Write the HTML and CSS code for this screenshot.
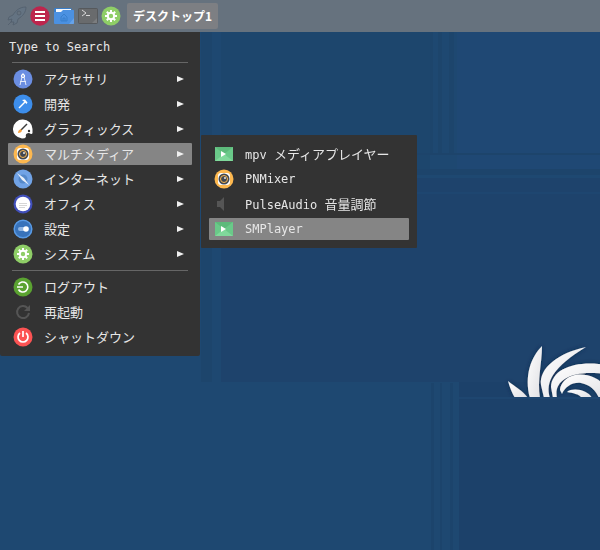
FILE: index.html
```html
<!DOCTYPE html>
<html lang="ja">
<head>
<meta charset="utf-8">
<title>デスクトップ1</title>
<link rel="stylesheet" href="styles.css">
</head>
<body>
<svg class="wallpaper" aria-hidden="true">
  <defs>
    <linearGradient id="petal" x1="0" y1="0" x2="1" y2="1"><stop offset="0" stop-color="#fff"/><stop offset="1" stop-color="#dfdfe3"/></linearGradient>
    <filter id="shade" x="-20%" y="-20%" width="140%" height="140%"><feDropShadow dx="0" dy="0" stdDeviation="2" flood-color="#0b2747" flood-opacity=".8"/></filter>
    <clipPath id="horizon"><rect x="490" y="330" width="200" height="67"/></clipPath>
  </defs>
  <rect width="100%" height="100%" fill="#1e4871"/>
  <rect x="221" y="0" width="209" height="170" fill="#1d466d"/>
  <rect x="457" y="0" width="100%" height="170" fill="#1f4874"/>
  <rect x="201" y="0" width="11" height="382" fill="#1d456c"/>
  <rect x="221" y="178" width="100%" height="204" fill="#1e436c"/>
  <rect x="430" y="0" width="3" height="153" fill="#1d456c"/>
  <rect x="438" y="0" width="4" height="153" fill="#1d456c"/>
  <rect x="449" y="0" width="5" height="153" fill="#1d456c"/>
  <rect x="417" y="153" width="100%" height="2" fill="#1d446b"/>
  <rect x="417" y="169" width="100%" height="6" fill="#1d446b"/>
  <rect x="417" y="192" width="100%" height="2" fill="#1e4670"/>
  <rect x="459" y="382" width="100%" height="100%" fill="#1c416a"/>
  <rect x="459" y="397" width="100%" height="2" fill="#1e4670"/>
  <rect x="431" y="383" width="3" height="100%" fill="#1c446c"/>
  <rect x="440" y="383" width="2" height="100%" fill="#1c446c"/>
  <rect x="450" y="383" width="3" height="100%" fill="#1c446c"/>
  <g clip-path="url(#horizon)">
    <g fill="url(#petal)" filter="url(#shade)">
      <path d="M508 381C514 386 523 391 528 398H515C512 393 510 388 508 381Z"/>
      <path d="M542 346C531 357 524 376 530 398H540C537 380 542 364 542 346Z"/>
      <path d="M586 347C558 353 539 368 541 385L544 398H550C545 382 553 367 586 347Z"/>
      <path d="M612 366C580 359 552 367 551 387L553 398H557C553 380 572 368 612 375Z"/>
      <path d="M612 398C604 378 588 373 575 375 566 377 560 384 560 390L562 394C565 387 572 382 581 383 591 385 596 391 599 398Z"/>
      <path d="M567 392C573 387 588 390 592 398H582C579 394 573 393 567 392Z"/>
    </g>
  </g>
</svg>

<header class="panel">
  <button class="launcher" aria-label="ランチャー"><svg viewBox="0 0 20 20"><path d="M19 1C13 1 9 4 6 9L2 11 1 14 5 13 4 16 7 16 6 19 10 17 11 13C16 10 19 6 19 1ZM1 19L5 15M12 5A2 2 0 1 1 12 9 2 2 0 0 1 12 5" fill="#647382" stroke="#525e6c" stroke-width=".8"/></svg></button>
  <button class="launcher" aria-label="メニュー"><svg viewBox="0 0 20 20"><circle cx="10" cy="10" r="9.700" fill="#bd254d"/><path d="M5 6H15M5 10H15M5 14H15" stroke="#fff" stroke-width="2"/></svg></button>
  <button class="launcher wide" aria-label="ファイル"><svg viewBox="0 0 22 20"><path d="M1 3Q1 2 2 2H17Q19 2 19 4H21V8H1Z" fill="#397ec9"/><path d="M3 3H18V7H3Z" fill="#f4f7fc"/><path d="M1 6H8L10 4H20Q21 4 21 5V17Q21 18 20 18H2Q1 18 1 17Z" fill="#4b91e2"/><path d="M21 12L16 18H20Q21 18 21 17Z" fill="#66a3ea"/><path d="M8 15V11L11 8 14 11V15ZM10 15V12H12V15" fill="none" stroke="#347bc9" stroke-width=".8"/></svg></button>
  <button class="launcher" aria-label="端末"><svg viewBox="0 0 20 20"><rect x=".5" y="2.500" width="19" height="15" rx="1" fill="#696b6d" stroke="#56595c"/><path d="M19 12L14 17H19Z" fill="#7b7d7f"/><path d="M4 4L8 7 4 10M8 9.500H12" fill="none" stroke="#d8d8d8"/></svg></button>
  <button class="launcher last" aria-label="設定"><svg viewBox="0 0 20 20"><use href="#gear"/></svg></button>
  <button class="workspace">デスクトップ1</button>
</header>

<svg class="library" aria-hidden="true">
  <symbol id="gear" viewBox="0 0 20 20"><circle cx="10" cy="10" r="9.500" fill="#8fce67"/><path d="M10 4V16M4 10H16M5.800 5.800L14.200 14.200M14.200 5.800L5.800 14.200" stroke="#fff" stroke-width="2"/><circle cx="10" cy="10" r="3.200" fill="#8fce67" stroke="#fff" stroke-width="2"/></symbol>
  <symbol id="speaker" viewBox="0 0 20 20"><circle cx="10" cy="10" r="9.500" fill="#fdb84f"/><rect x="4" y="4" width="12" height="12" rx="3" fill="#fff"/><circle cx="10" cy="10" r="5.500" fill="#424852"/><circle cx="10" cy="10" r="3.500" fill="#424852" stroke="#fdb84f"/><circle cx="11" cy="9" r="1" fill="#e6e6e6"/></symbol>
  <symbol id="video" viewBox="0 0 20 20"><path d="M1 3H19V17H1Z" fill="#6ac989"/><path d="M1 3H19L10 10Z" fill="#5dba7b"/><path d="M1 17L10 10 19 17Z" fill="#80d99b"/><path d="M7 7L12 10 7 13Z" fill="#fff"/></symbol>
</svg>

<nav class="menu">
  <input class="search" type="text" value="Type to Search" aria-label="Type to Search">
  <ul class="group">
    <li><button class="item"><svg class="icon" viewBox="0 0 20 20"><circle cx="10" cy="10" r="9.500" fill="#6b8ee2"/><path d="M10 4V6M9 8L7 16M11 8L13 16M7 12.500H13" stroke="#e4ebfb" fill="none"/><circle cx="10" cy="7" r="1.700" fill="#a9bdef" stroke="#fff"/></svg><span>アクセサリ</span><i class="arrow"></i></button></li>
    <li><button class="item"><svg class="icon" viewBox="0 0 20 20"><circle cx="10" cy="10" r="9.500" fill="#3d8eeb"/><path d="M6 14L12 8" stroke="#fff" stroke-width="1.500"/><path d="M9 6L12 5.500 14.500 8.500 13.500 10 11.500 8Z" fill="#fff"/></svg><span>開発</span><i class="arrow"></i></button></li>
    <li><button class="item"><svg class="icon" viewBox="0 0 20 20"><path d="M10 .500A9.500 9.500 0 0 1 19.500 10V14Q19 16 16 14 12 14 13 18 12 19.500 9 19.500A9.500 9.500 0 0 1 10 .500Z" fill="#fff"/><path d="M8 11L14 5" stroke="#3c3c3c" stroke-width="1.500"/><path d="M5 14Q5 11 8 10L9 12Q8 14 5 14Z" fill="#faa03a"/><circle cx="16" cy="12" r="1.200" fill="#333"/></svg><span>グラフィックス</span><i class="arrow"></i></button></li>
    <li class="open"><button class="item selected" aria-expanded="true"><svg class="icon"><use href="#speaker"/></svg><span>マルチメディア</span><i class="arrow"></i></button>
      <ul class="submenu">
        <li><button class="item"><svg class="icon"><use href="#video"/></svg><span><span class="latin">mpv </span>メディアプレイヤー</span></button></li>
        <li><button class="item"><svg class="icon"><use href="#speaker"/></svg><span class="latin">PNMixer</span></button></li>
        <li><button class="item"><svg class="icon" viewBox="0 0 20 20"><path d="M3 7H6L10 3V17L6 13H3Z" fill="#555"/></svg><span><span class="latin">PulseAudio </span>音量調節</span></button></li>
        <li><button class="item selected"><svg class="icon"><use href="#video"/></svg><span class="latin">SMPlayer</span></button></li>
      </ul>
    </li>
    <li><button class="item"><svg class="icon" viewBox="0 0 20 20"><circle cx="10" cy="10" r="9.500" fill="#71a3e6"/><circle cx="10" cy="10" r="4.500" fill="#5589ca"/><path d="M4 4L11 9 16 16 9 11Z" fill="#e8eff9"/></svg><span>インターネット</span><i class="arrow"></i></button></li>
    <li><button class="item"><svg class="icon" viewBox="0 0 20 20"><circle cx="10" cy="10" r="9.500" fill="#414fba"/><circle cx="10" cy="10" r="7.300" fill="#fff"/><path d="M6 9.500H14M6 11.500H14M6 13.500H12" stroke="#ccc" stroke-width=".8"/></svg><span>オフィス</span><i class="arrow"></i></button></li>
    <li><button class="item"><svg class="icon" viewBox="0 0 20 20"><circle cx="10" cy="10" r="8.800" fill="#3873bb" stroke="#599be6" stroke-width="1.500"/><rect x="5" y="8" width="10" height="4" rx="2" fill="#8eb4e2"/><circle cx="13" cy="10" r="2.800" fill="#fff"/></svg><span>設定</span><i class="arrow"></i></button></li>
    <li><button class="item"><svg class="icon"><use href="#gear"/></svg><span>システム</span><i class="arrow"></i></button></li>
  </ul>
  <ul class="group">
    <li><button class="item"><svg class="icon" viewBox="0 0 20 20"><circle cx="10" cy="10" r="9.500" fill="#5ba331"/><path d="M5.500 7.500A5 5 0 1 1 5.500 12.500M4 10H10" fill="none" stroke="#fff" stroke-width="1.600"/></svg><span>ログアウト</span></button></li>
    <li><button class="item"><svg class="icon" viewBox="0 0 20 20"><path d="M14.500 6A6 6 0 1 0 16 11" fill="none" stroke="#555" stroke-width="2"/><path d="M17 3V9H11Z" fill="#555"/></svg><span>再起動</span></button></li>
    <li><button class="item"><svg class="icon" viewBox="0 0 20 20"><circle cx="10" cy="10" r="9.500" fill="#fc5353"/><path d="M7 6A5 5 0 1 0 13 6M10 4V10" fill="none" stroke="#fff" stroke-width="1.700"/></svg><span>シャットダウン</span></button></li>
  </ul>
</nav>
</body>
</html>
```
FILE: styles.css
```css
* { box-sizing: border-box; }
body {
  margin: 0;
  min-height: 100vh;
  background: #1e4871;
  color: #e6e6e6;
  font: 13px/22px "Noto Sans CJK JP", sans-serif;
}
button, input {
  margin: 0;
  padding: 0;
  border: 0;
  background: none;
  color: inherit;
  font: inherit;
}
ul { list-style: none; margin: 0; padding: 0; }
.wallpaper { position: fixed; inset: 0; z-index: -1; width: 100%; height: 100%; }
.library { position: absolute; width: 0; height: 0; }
.panel {
  display: flex;
  align-items: center;
  gap: 3px;
  height: 32px;
  padding-left: 7px;
  background: #66727e;
}
.launcher { width: 20px; height: 20px; }
.launcher svg { display: block; width: 100%; height: 100%; }
.wide { width: 22px; }
.last { margin-right: 3px; }
.workspace {
  height: 26px;
  padding: 0 6px;
  border-radius: 2px;
  background: #7d7f83;
  color: #fff;
  font-size: 12px;
  font-weight: 700;
}
.menu {
  width: 200px;
  padding: 0 8px 8px;
  border-radius: 0 0 2px 2px;
  background: #333;
}
.search {
  display: block;
  width: 100%;
  height: 30px;
  padding-left: 1px;
}
.search, .latin { font-family: "DejaVu Sans Mono", monospace; font-size: 12px; }
.group, .submenu { display: flex; flex-direction: column; gap: 3px; }
.group::before { content: ""; height: 1px; margin: 0 4px 2px; background: #666; }
.group + .group { margin-top: 5px; }
.open { position: relative; }
.item {
  display: flex;
  align-items: center;
  gap: 11px;
  width: 100%;
  height: 22px;
  padding: 0 8px 0 5px;
  border-radius: 1px;
  text-align: left;
  white-space: nowrap;
}
.selected { background: #858585; }
.icon { flex: none; width: 20px; height: 20px; }
.arrow {
  margin-left: auto;
  border: solid transparent;
  border-width: 3px 0 3px 7px;
  border-left-color: #f0f0f0;
}
.submenu {
  position: absolute;
  top: -8px;
  left: calc(100% + 9px);
  width: 216px;
  padding: 8px;
  border-radius: 1px;
  background: #333;
}
```
